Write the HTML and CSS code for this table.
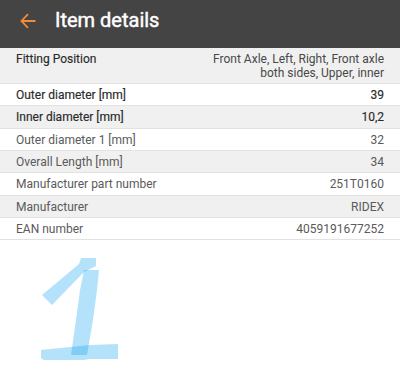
FILE: index.html
```html
<!DOCTYPE html>
<html>
<head>
<meta charset="utf-8">
<link rel="stylesheet" href="styles.css">
</head>
<body>
<div class="app">
  <header class="topbar">
    <svg class="back" width="16" height="16" viewBox="0 0 16 16">
      <path d="M1.5 8H15.5M8 1.2L1.5 8L8 14.8" fill="none" stroke="#f28a3a" stroke-width="1.8"/>
    </svg>
    <h1 class="title">Item details</h1>
  </header>
  <div class="details">
    <div class="row alt strong-label tall">
      <span class="label">Fitting Position</span>
      <span class="value wrap">Front Axle, Left, Right, Front axle both sides, Upper, inner</span>
    </div>
    <div class="row strong"><span class="label">Outer diameter [mm]</span><span class="value">39</span></div>
    <div class="row alt strong"><span class="label">Inner diameter [mm]</span><span class="value">10,2</span></div>
    <div class="row"><span class="label">Outer diameter 1 [mm]</span><span class="value">32</span></div>
    <div class="row alt"><span class="label">Overall Length [mm]</span><span class="value">34</span></div>
    <div class="row"><span class="label">Manufacturer part number</span><span class="value">251T0160</span></div>
    <div class="row alt"><span class="label">Manufacturer</span><span class="value">RIDEX</span></div>
    <div class="row"><span class="label">EAN number</span><span class="value">4059191677252</span></div>
  </div>
  <svg class="scribble" width="120" height="120" viewBox="0 0 120 120">
    <polygon class="ink" points="42,55 79,24 81,18 96,18 96,26 84,32 52,65"/>
    <polygon class="ink" points="84,30 99,30 97,50 93,80 87,115 71,115 76,80 80,50"/>
    <polygon class="ink" points="41,110 90,105 118,104 118,119 90,119 49,125 41,118"/>
  </svg>
</div>
</body>
</html>
```

FILE: styles.css
```css
html, body {
  margin: 0;
  padding: 0;
  background: #ffffff;
}
body {
  font-family: Roboto, "Noto Sans", "Liberation Sans", sans-serif;
}
.app {
  position: relative;
  width: 400px;
  height: 369px;
  overflow: hidden;
}
.topbar {
  height: 48px;
  background: #444444;
  display: flex;
  align-items: flex-start;
  box-sizing: border-box;
  padding: 6px 0 0 20px;
}
.back {
  margin-top: 7px;
  flex: none;
}
.title {
  margin: 0 0 0 19px;
  font-size: 20px;
  font-weight: 400;
  -webkit-text-stroke: 0.45px #ffffff;
  color: #ffffff;
  line-height: 28px;
}
.details {
  display: flex;
  flex-direction: column;
}
.row {
  display: flex;
  justify-content: space-between;
  align-items: flex-start;
  padding: 4px 16px 3.35px 16px;
  border-bottom: 1px solid #e2e2e2;
  font-size: 12px;
  line-height: 14px;
  color: #5a5a5a;
  background: #ffffff;
}
.row.alt {
  background: #f0f0f0;
}
.row.tall {
  padding-top: 4px;
  padding-bottom: 3px;
}
.label {
  flex: 1;
}
.value {
  text-align: right;
}
.value.wrap {
  max-width: 176px;
  color: #484848;
}
.strong-label .label {
  color: #2a2a2a;
  -webkit-text-stroke: 0.15px #2a2a2a;
}
.strong .label, .strong .value {
  color: #2a2a2a;
  -webkit-text-stroke: 0.15px #2a2a2a;
}
.scribble {
  position: absolute;
  left: 0;
  top: 240px;
}
.ink {
  fill: rgb(0, 156, 241);
  fill-opacity: 0.29;
}
```
